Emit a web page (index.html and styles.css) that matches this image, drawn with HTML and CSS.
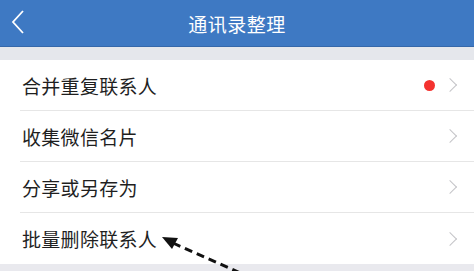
FILE: index.html
```html
<!DOCTYPE html>
<html lang="zh-CN">
<head>
  <meta charset="UTF-8">
  <meta name="viewport" content="width=device-width, initial-scale=1.0">
  <title>通讯录整理</title>
  <link rel="stylesheet" href="styles.css">
</head>
<body>
  <div class="nav-bar">
    <svg class="back" width="14" height="26" viewBox="0 0 14 26">
      <polyline points="12,2 2,13 12,24" fill="none" stroke="#ffffff" stroke-width="1.8"/>
    </svg>
    <div class="nav-title">通讯录整理</div>
  </div>
  <div class="gap"></div>
  <div class="list">
    <div class="row">
      <span class="label">合并重复联系人</span>
      <span class="dot"></span>
      <span class="chevron"></span>
    </div>
    <div class="row">
      <span class="label">收集微信名片</span>
      <span class="chevron"></span>
    </div>
    <div class="row">
      <span class="label">分享或另存为</span>
      <span class="chevron"></span>
    </div>
    <div class="row">
      <span class="label">批量删除联系人</span>
      <span class="chevron"></span>
    </div>
  </div>
  <div class="footer"></div>

  <svg class="pointer" width="90" height="40" viewBox="0 0 90 40">
    <line x1="12" y1="7" x2="86" y2="40" stroke="#111111" stroke-width="3" stroke-dasharray="8 5"/>
    <polygon points="1,1 17,2 11,13" fill="#111111"/>
  </svg>
</body>
</html>
```

FILE: styles.css
```css
body {
  margin: 0;
  width: 474px;
  height: 271px;
  overflow: hidden;
  background-color: #efeff4;
  font-family: "Noto Sans CJK SC", "Noto Sans", sans-serif;
  position: relative;
}

.nav-bar {
  height: 46px;
  background-color: #3e79c3;
  border-bottom: 1px solid #3568aa;
  display: flex;
  align-items: center;
  justify-content: center;
  position: relative;
}

.back {
  position: absolute;
  left: 11px;
  top: 9px;
}

.nav-title {
  color: #ffffff;
  font-size: 19px;
  letter-spacing: 0.5px;
}

.gap {
  height: 13px;
  background-color: #e5e7ec;
}

.list {
  background-color: #ffffff;
  padding-left: 20px;
}

.row {
  height: 51px;
  display: flex;
  align-items: center;
  border-bottom: 1px solid #e6e6e6;
  padding-right: 18px;
  box-sizing: border-box;
}

.row:last-child {
  border-bottom: none;
}

.label {
  flex: 1;
  font-size: 19px;
  color: #1f1f1f;
  padding-left: 2px;
  letter-spacing: 0.3px;
}

.dot {
  width: 11px;
  height: 11px;
  border-radius: 50%;
  background-color: #f4322f;
  margin-right: 10px;
}

.chevron {
  width: 9px;
  height: 9px;
  border-top: 1.5px solid #c4c4c8;
  border-right: 1.5px solid #c4c4c8;
  transform: rotate(45deg);
  margin-right: 1px;
}

.footer {
  height: 8px;
  background-color: #e9e9ee;
}

.pointer {
  position: absolute;
  left: 161px;
  top: 236px;
}
```
